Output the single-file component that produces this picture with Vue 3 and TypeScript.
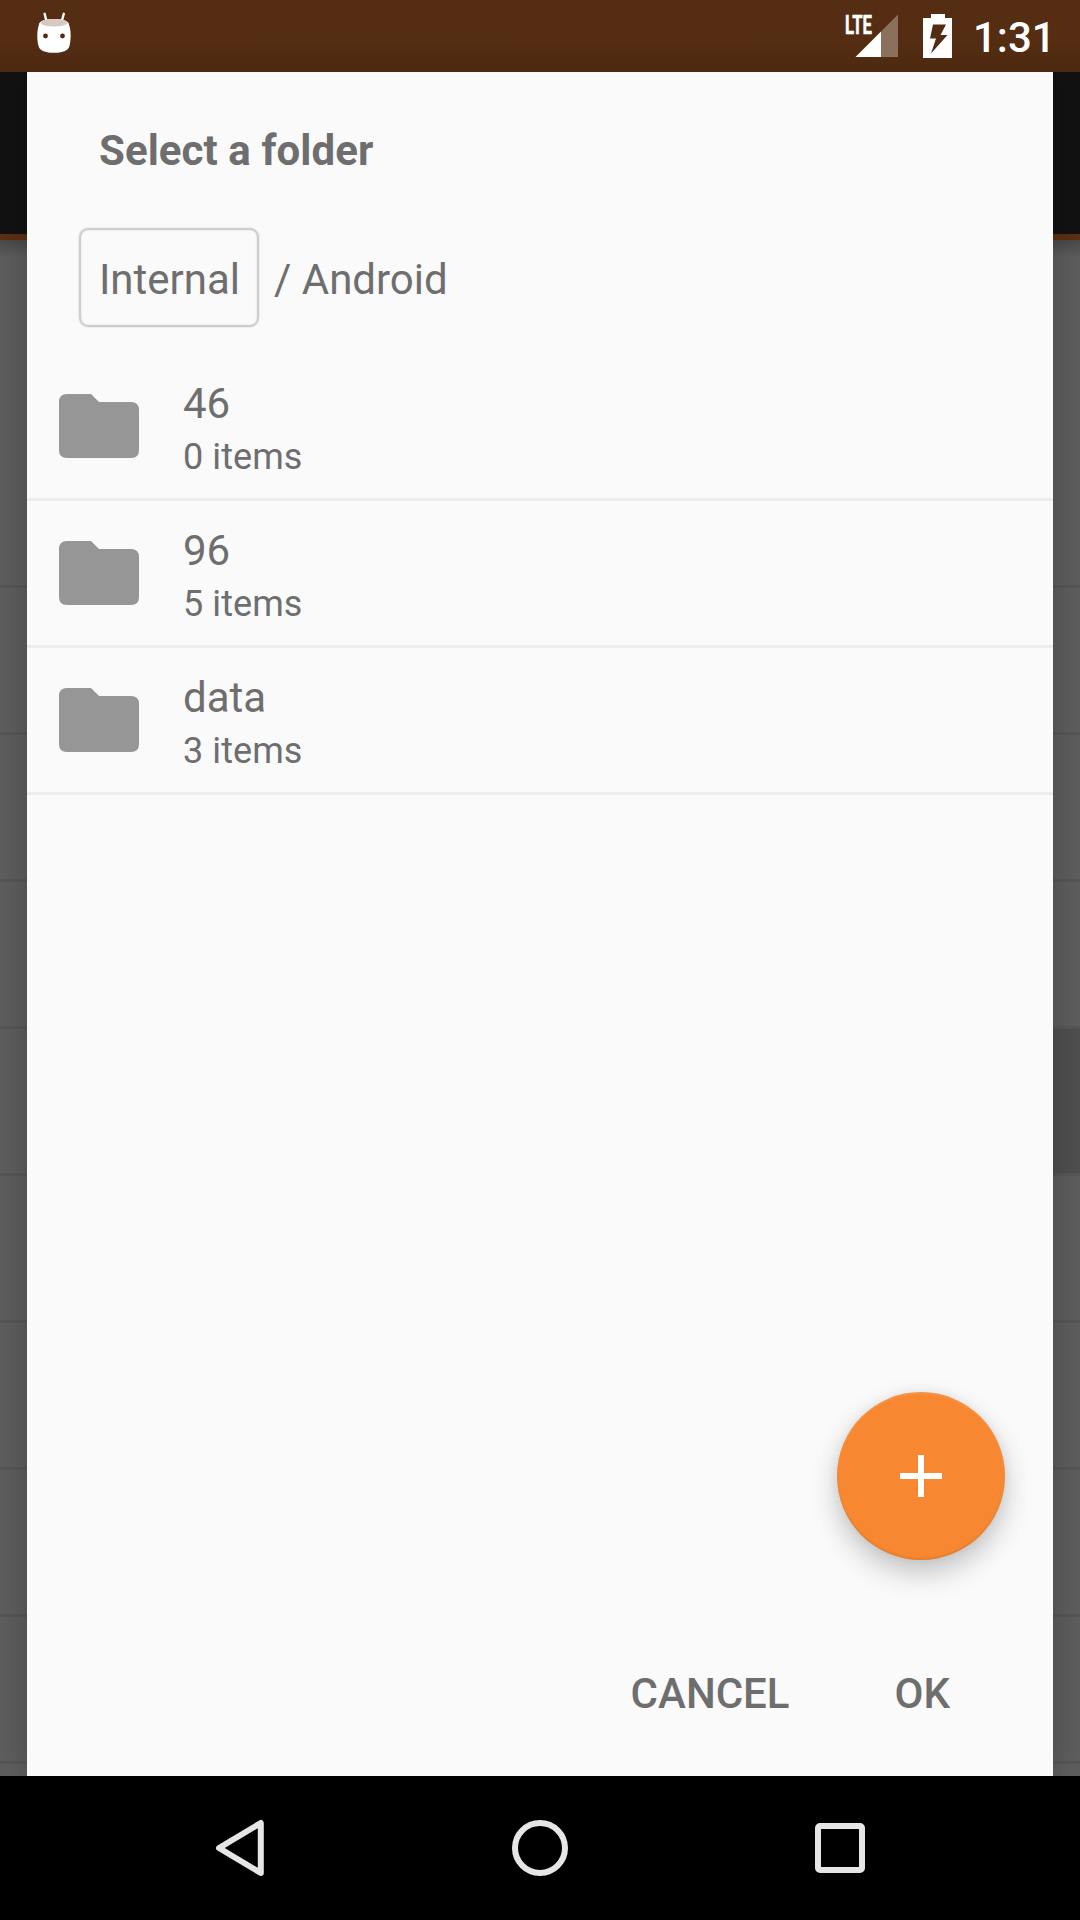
<script setup lang="ts">
interface Folder {
  name: string
  items: string
}

const folders: Folder[] = [
  { name: '46', items: '0 items' },
  { name: '96', items: '5 items' },
  { name: 'data', items: '3 items' },
]

const pageRows = [1, 2, 3, 4, 5, 6, 7, 8, 9, 10]
const pressedRow = 5
</script>

<template>
  <div class="screen">
    <header class="status">
      <svg class="bot" width="36" height="42" viewBox="0 0 36 42">
        <path d="M8.600 1.800 10.700 10M27.800 1.800 25.600 10" stroke="#fff" stroke-width="2.400" stroke-linecap="round" />
        <path d="M3 12.500C3 9 9 7 18 7s15 2 15 5.500c2.200 6 2.200 15.500.3 22-1.200 4-6.500 6.300-15.300 6.300S3.900 38.500 2.700 34.500C.8 28 .8 18.500 3 12.500Z" fill="#fff" />
        <ellipse cx="18" cy="10.700" rx="13.500" ry="3.800" fill="#d5c9c1" />
        <circle cx="9.500" cy="24" r="2.400" fill="#522c12" />
        <circle cx="26.500" cy="24" r="2.400" fill="#522c12" />
      </svg>
      <div class="indicators">
        <svg class="signal" width="56" height="48" viewBox="0 0 56 48">
          <path d="M53 2.500V45H36V19.500Z" fill="#8a705d" />
          <path d="M36 19.500V45H10.500Z" fill="#fff" />
          <text x="0" y="21.500" textLength="27" lengthAdjust="spacingAndGlyphs" class="lte">LTE</text>
        </svg>
        <svg class="battery" width="30" height="45" viewBox="0 0 30 45">
          <path d="M8 0H22V4H29V44H0V4H8Z" fill="#fff" />
          <path d="M10 10.500H23L17.500 21H24.500L8 39.500 13 24.500H7Z" fill="#522c12" />
        </svg>
        <span class="time">1:31</span>
      </div>
    </header>

    <div class="stage">
      <div class="page">
        <div class="toolbar"></div>
        <div class="path-row"></div>
        <div v-for="row in pageRows" :key="row" class="page-row" :class="{ pressed: row === pressedRow }"></div>
      </div>

      <section class="dialog">
        <h1>Select a folder</h1>
        <nav class="crumbs">
          <button class="crumb">Internal</button>
          <span class="current">/ Android</span>
        </nav>
        <ul>
          <li v-for="folder in folders" :key="folder.name">
            <svg width="82" height="66" viewBox="0 0 82 66">
              <path d="M8 1H33L41 9H73Q81 9 81 17V57Q81 65 73 65H9Q1 65 1 57V9Q1 1 9 1Z" fill="#969696" />
            </svg>
            <div class="label">
              <div class="name">{{ folder.name }}</div>
              <div class="count">{{ folder.items }}</div>
            </div>
          </li>
        </ul>
        <footer>
          <button>CANCEL</button>
          <button>OK</button>
        </footer>
        <button class="fab" aria-label="New folder">
          <svg width="42" height="42" viewBox="0 0 42 42">
            <path d="M18 0H24V18H42V24H24V42H18V24H0V18H18Z" fill="#fff" />
          </svg>
        </button>
      </section>
    </div>

    <div class="navbar">
      <svg width="50" height="58" viewBox="0 0 50 58">
        <path d="M45.800 4V54L4 29Z" fill="none" stroke="#e6e6e6" stroke-width="6" stroke-linejoin="round" />
      </svg>
      <svg width="58" height="58" viewBox="0 0 58 58">
        <circle cx="29" cy="29" r="25" fill="none" stroke="#e6e6e6" stroke-width="6" />
      </svg>
      <svg width="50" height="50" viewBox="0 0 50 50">
        <rect x="3" y="3" width="44" height="44" rx="2" fill="none" stroke="#e6e6e6" stroke-width="6" />
      </svg>
    </div>
  </div>
</template>

<style>
body {
  margin: 0;
}
</style>

<style scoped>
.screen {
  width: 1080px;
  height: 1920px;
  display: flex;
  flex-direction: column;
  overflow: hidden;
  background: #000;
  color: #6e6e6e;
  font-family: Roboto, sans-serif;
}
.status {
  height: 72px;
  flex: none;
  box-sizing: border-box;
  display: flex;
  justify-content: space-between;
  padding: 12px 29px 0 36px;
  background: linear-gradient(#542d12 60%, #4c2910);
}
.indicators {
  display: flex;
}
.signal {
  overflow: visible;
}
.lte {
  font: 700 26px Roboto, sans-serif;
  fill: #fff;
  stroke: #fff;
  stroke-width: 0.5px;
}
.battery {
  margin: 2px 0 0 22px;
}
.time {
  width: 78px;
  margin-left: 20px;
  color: #fff;
  font-size: 42px;
  font-weight: 500;
  line-height: 52px;
  white-space: nowrap;
}
.stage {
  height: 1704px;
  flex: none;
  display: grid;
  overflow: hidden;
}
.page,
.dialog {
  grid-area: 1 / 1;
}
.page {
  height: 1704px;
  overflow: hidden;
  background: #5e5e5e;
}
.toolbar {
  height: 162px;
  background: #121212;
  border-bottom: 6px solid #5c3013;
}
.path-row {
  height: 201px;
  background: linear-gradient(#4a4a4a, #5e5e5e 18px);
}
.page-row {
  height: 144px;
  border-bottom: 3px solid #575757;
}
.pressed {
  background: linear-gradient(90deg, transparent 50%, #505050 50%);
}
.dialog {
  position: relative;
  width: 1026px;
  height: 1704px;
  margin: 0 27px;
  display: flex;
  flex-direction: column;
  background: #fafafa;
  box-shadow: 0 0 36px rgba(0, 0, 0, 0.24);
}
h1 {
  margin: 54px 0 0 72px;
  font-size: 42px;
  font-weight: 700;
  line-height: 50px;
  letter-spacing: 0.07px;
}
button {
  padding: 0;
  border: 0;
  background: none;
  color: inherit;
  font: inherit;
}
.crumbs {
  display: flex;
  align-items: center;
  margin: 52px 0 0 52px;
  font-size: 42px;
  line-height: 50px;
}
.crumb {
  box-sizing: border-box;
  width: 180px;
  height: 99px;
  padding: 4px 0 0 1px;
  margin-right: 15px;
  border: 2px solid #cdcdcd;
  border-radius: 9px;
  box-shadow: 0 0 2px #d0d0d0, inset 0 0 2px #d8d8d8;
}
.current {
  padding-top: 4px;
}
ul {
  list-style: none;
  margin: 27px 0 0;
  padding: 0;
}
li {
  height: 144px;
  display: flex;
  align-items: center;
  border-bottom: 3px solid #ededed;
}
li svg {
  margin-left: 31px;
}
.label {
  margin: 6px 0 0 43px;
}
.name {
  font-size: 42px;
  line-height: 57px;
}
.count {
  font-size: 36px;
  line-height: 51px;
  letter-spacing: 0.07px;
}
footer {
  display: flex;
  justify-content: flex-end;
  gap: 105px;
  margin: auto 103px 57px 0;
  font-size: 42px;
  font-weight: 500;
  line-height: 50px;
}
.fab {
  position: absolute;
  right: 48px;
  bottom: 216px;
  width: 168px;
  height: 168px;
  display: flex;
  align-items: center;
  justify-content: center;
  border-radius: 50%;
  background: #f78831;
  box-shadow: 0 13px 28px rgba(0, 0, 0, 0.22), 0 0 12px rgba(0, 0, 0, 0.06),
    inset 0 -2px 2px rgba(0, 0, 0, 0.08), inset 0 2px 2px rgba(255, 255, 255, 0.1);
}
.navbar {
  height: 144px;
  flex: none;
  box-sizing: border-box;
  display: flex;
  align-items: center;
  justify-content: space-between;
  padding: 0 215px;
}
</style>
